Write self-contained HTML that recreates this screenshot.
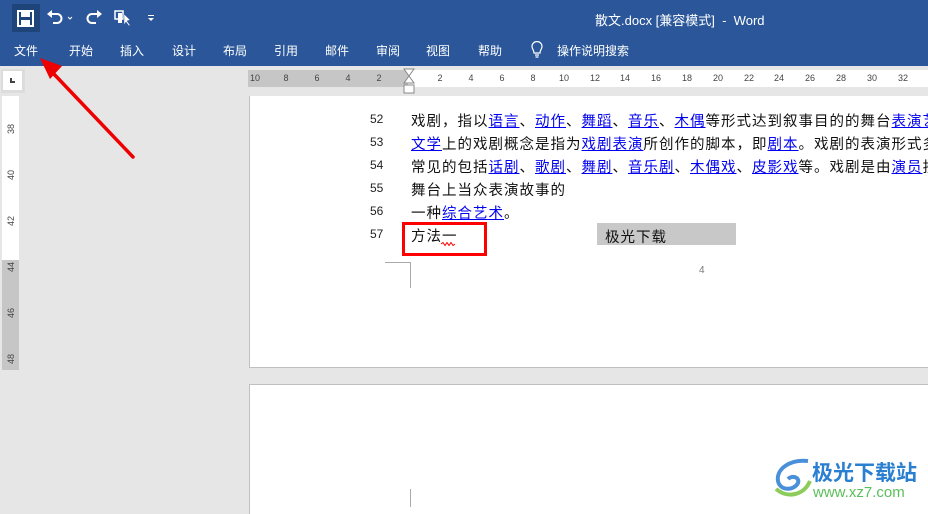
<!DOCTYPE html>
<html><head><meta charset="utf-8"><style>
*{margin:0;padding:0;box-sizing:border-box}
body{width:928px;height:507px;overflow:hidden;background:#e6e6e6;font-family:"Liberation Sans","Noto Sans CJK SC",sans-serif;position:relative}
.abs{position:absolute}
#top{left:0;top:0;width:928px;height:66px;background:#2b579a;color:#fff}
.tab{position:absolute;top:42px;font-size:12px;color:#fff}
.rn{position:absolute;top:73px;font-size:9px;color:#444;transform:translateX(-50%)}
.ln{position:absolute;left:370px;font-size:12px;color:#222}
.tl{position:absolute;left:411px;font-size:14.5px;letter-spacing:1px;color:#111;white-space:nowrap}
.tl a{color:#0000ee;text-decoration:underline}
.vn{position:absolute;left:4px;font-size:9px;color:#444;transform:rotate(-90deg);width:14px;text-align:center}
</style></head><body>
<div id="top" class="abs">
  <div class="abs" style="left:12px;top:4px;width:28px;height:28px;background:#1e4479"></div>
  <svg class="abs" style="left:16px;top:9px" width="20" height="20" viewBox="0 0 20 20"><rect x="2" y="2" width="15" height="15" fill="none" stroke="#fff" stroke-width="2"/><rect x="5" y="3" width="9" height="5" fill="#fff"/><rect x="5" y="11" width="9" height="6" fill="#fff"/></svg>
  <svg class="abs" style="left:46px;top:9px" width="30" height="18" viewBox="0 0 30 18"><path d="M4 5 H11 A4.5 4.5 0 0 1 11 14 H7" fill="none" stroke="#fff" stroke-width="2"/><path d="M1 5 L6 1 V9 Z" fill="#fff"/><path d="M22 8 l2 2 l2 -2" fill="none" stroke="#fff" stroke-width="1"/></svg>
  <svg class="abs" style="left:85px;top:9px" width="18" height="18" viewBox="0 0 18 18"><path d="M14 5 H7 A4.5 4.5 0 0 0 7 14 H11" fill="none" stroke="#fff" stroke-width="2"/><path d="M17 5 L12 1 V9 Z" fill="#fff"/></svg>
  <svg class="abs" style="left:114px;top:9px" width="20" height="18" viewBox="0 0 20 18"><rect x="1" y="2" width="8" height="8" fill="none" stroke="#fff" stroke-width="1.5"/><rect x="4" y="4" width="4" height="10" fill="#fff"/><path d="M10 5 L10 16 L12 13 L15 17 L16 16 L13 12 L16 11 Z" fill="#fff" stroke="#2b579a" stroke-width=".5"/></svg>
  <div class="abs" style="left:148px;top:15px;width:6px;height:1px;background:#fff"></div>
  <div class="abs" style="left:148px;top:18px;width:0;height:0;border-left:3px solid transparent;border-right:3px solid transparent;border-top:3px solid #fff"></div>
  <div class="abs" style="left:595px;top:10px;font-size:13px">散文.docx [兼容模式]&nbsp; - &nbsp;Word</div>
  <div class="tab" style="left:14px">文件</div><div class="tab" style="left:69px">开始</div><div class="tab" style="left:120px">插入</div><div class="tab" style="left:172px">设计</div><div class="tab" style="left:223px">布局</div><div class="tab" style="left:274px">引用</div><div class="tab" style="left:325px">邮件</div><div class="tab" style="left:376px">审阅</div><div class="tab" style="left:426px">视图</div><div class="tab" style="left:478px">帮助</div>
  <svg class="abs" style="left:530px;top:41px" width="14" height="18" viewBox="0 0 14 18"><path d="M4 12 C4 9 2 8 2 5.5 A5 5 0 0 1 12 5.5 C12 8 10 9 10 12 Z M5 14 H9 M5.5 16 H8.5" fill="none" stroke="#fff" stroke-width="1.2"/></svg>
  <div class="tab" style="left:557px">操作说明搜索</div>
</div>
<div class="abs" style="left:1px;top:69px;width:24px;height:24px;background:#dcdcdc"></div>
<div class="abs" style="left:3px;top:71px;width:19px;height:19px;background:#fff"></div>
<div class="abs" style="left:10px;top:78px;width:2px;height:5px;background:#444"></div>
<div class="abs" style="left:10px;top:81px;width:5px;height:2px;background:#444"></div>
<div class="abs" style="left:248px;top:70px;width:160px;height:17px;background:#c6c6c6"></div>
<div class="abs" style="left:408px;top:70px;width:520px;height:17px;background:#fff"></div>
<svg class="abs" style="left:402px;top:68px" width="14" height="28" viewBox="0 0 14 28"><path d="M2 1 H12 L7 8 Z M7 8 L2 15 H12 Z" fill="#fff" stroke="#888"/><rect x="2" y="17" width="10" height="8" fill="#fff" stroke="#888"/></svg>
<div class="rn" style="left:255px">10</div><div class="rn" style="left:286px">8</div><div class="rn" style="left:317px">6</div><div class="rn" style="left:348px">4</div><div class="rn" style="left:379px">2</div>
<div class="rn" style="left:440px">2</div><div class="rn" style="left:471px">4</div><div class="rn" style="left:502px">6</div><div class="rn" style="left:533px">8</div><div class="rn" style="left:564px">10</div><div class="rn" style="left:595px">12</div><div class="rn" style="left:625px">14</div><div class="rn" style="left:656px">16</div><div class="rn" style="left:687px">18</div><div class="rn" style="left:718px">20</div><div class="rn" style="left:749px">22</div><div class="rn" style="left:779px">24</div><div class="rn" style="left:810px">26</div><div class="rn" style="left:841px">28</div><div class="rn" style="left:872px">30</div><div class="rn" style="left:903px">32</div>
<div class="abs" style="left:2px;top:96px;width:17px;height:164px;background:#fff"></div>
<div class="abs" style="left:2px;top:260px;width:17px;height:110px;background:#c6c6c6"></div>
<div class="vn" style="top:124px">38</div><div class="vn" style="top:170px">40</div><div class="vn" style="top:216px">42</div><div class="vn" style="top:262px">44</div><div class="vn" style="top:308px">46</div><div class="vn" style="top:354px">48</div>
<div class="abs" style="left:249px;top:96px;width:690px;height:272px;background:#fff;border-left:1px solid #c0c0c0;border-bottom:1px solid #c0c0c0"></div>
<div class="abs" style="left:249px;top:384px;width:690px;height:130px;background:#fff;border-left:1px solid #c0c0c0;border-top:1px solid #c0c0c0"></div>
<div class="abs" style="left:385px;top:262px;width:26px;height:1px;background:#aaa"></div>
<div class="abs" style="left:410px;top:262px;width:1px;height:26px;background:#aaa"></div>
<div class="abs" style="left:410px;top:489px;width:1px;height:18px;background:#aaa"></div>
<div class="ln" style="top:112px">52</div><div class="ln" style="top:135px">53</div><div class="ln" style="top:158px">54</div><div class="ln" style="top:181px">55</div><div class="ln" style="top:204px">56</div><div class="ln" style="top:227px">57</div>
<div class="tl" style="top:110px">戏剧，指以<a>语言</a>、<a>动作</a>、<a>舞蹈</a>、<a>音乐</a>、<a>木偶</a>等形式达到叙事目的的舞台<a>表演艺术</a></div>
<div class="tl" style="top:133px"><a>文学</a>上的戏剧概念是指为<a>戏剧表演</a>所创作的脚本，即<a>剧本</a>。戏剧的表演形式多</div>
<div class="tl" style="top:156px">常见的包括<a>话剧</a>、<a>歌剧</a>、<a>舞剧</a>、<a>音乐剧</a>、<a>木偶戏</a>、<a>皮影戏</a>等。戏剧是由<a>演员</a>扮</div>
<div class="tl" style="top:179px">舞台上当众表演故事的</div>
<div class="tl" style="top:202px">一种<a>综合艺术</a>。</div>
<div class="tl" style="top:225px">方法一</div>
<svg class="abs" style="left:441px;top:242px" width="14" height="4"><path d="M0 2 l2 -1.5 l2 3 l2 -3 l2 3 l2 -3 l2 3 l2 -1.5" stroke="red" fill="none" stroke-width="1"/></svg>
<div class="abs" style="left:402px;top:222px;width:85px;height:34px;border:3px solid #f00"></div>
<div class="abs" style="left:597px;top:223px;width:139px;height:22px;background:#c8c8c8;font-size:14.5px;letter-spacing:1px;padding:3px 0 0 8px;color:#111">极光下载</div>
<div class="abs" style="left:699px;top:265px;font-size:10px;color:#777">4</div>
<svg class="abs" style="left:0;top:0" width="160" height="170"><path d="M133 157 L52 72" stroke="#e00" stroke-width="3.5" stroke-linecap="round"/><path d="M40 58 L62 66 L50 79 Z" fill="#e00"/></svg>
<svg class="abs" style="left:770px;top:455px" width="44" height="44" viewBox="0 0 44 44"><path d="M38 6 C20 4 6 14 8 26 C10 36 24 36 28 28 C30 22 22 20 18 24" fill="none" stroke="#4a90d9" stroke-width="4"/><path d="M6 34 C18 44 34 40 40 26" fill="none" stroke="#8ccc5a" stroke-width="4"/></svg>
<div class="abs" style="left:812px;top:457px;font-size:21px;font-weight:bold;color:#2a7fd0">极光下载站</div>
<div class="abs" style="left:813px;top:484px;font-size:15px;color:#5abf5a">www.xz7.com</div>
</body></html>
